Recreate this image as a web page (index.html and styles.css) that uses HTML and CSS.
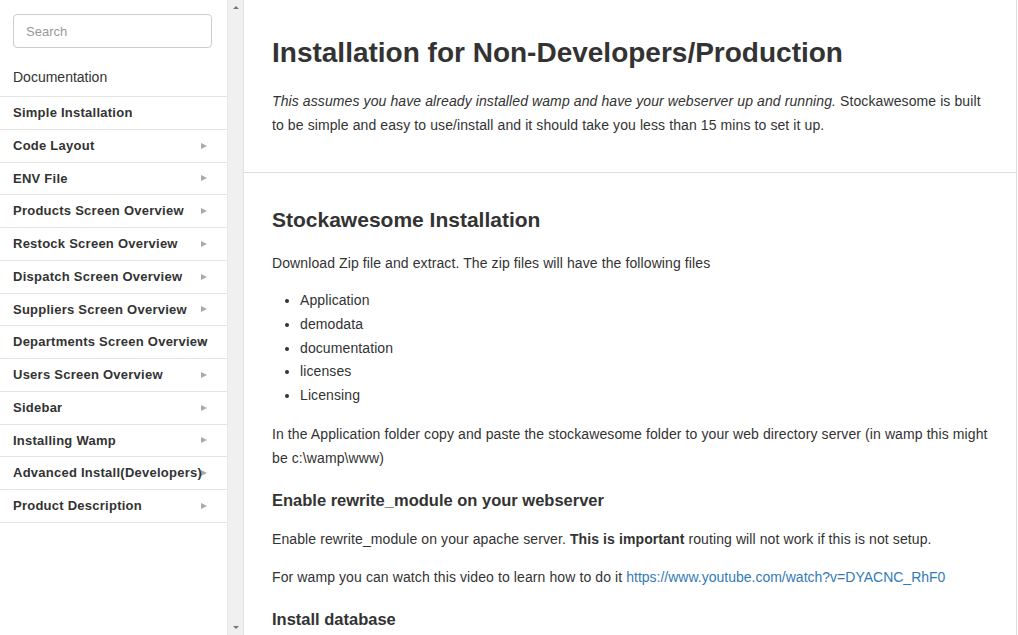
FILE: index.html
```html
<!DOCTYPE html>
<html>
<head>
<meta charset="utf-8">
<link rel="stylesheet" href="styles.css">
</head>
<body>
<div class="layout">
  <nav class="sidebar">
    <div class="search-wrap"><input class="search" type="text" placeholder="Search"></div>
    <div class="doc-title">Documentation</div>
    <ul class="menu">
      <li class="item nochev">Simple Installation</li>
      <li class="item">Code Layout<span class="chev"></span></li>
      <li class="item">ENV File<span class="chev"></span></li>
      <li class="item">Products Screen Overview<span class="chev"></span></li>
      <li class="item">Restock Screen Overview<span class="chev"></span></li>
      <li class="item">Dispatch Screen Overview<span class="chev"></span></li>
      <li class="item">Suppliers Screen Overview<span class="chev"></span></li>
      <li class="item">Departments Screen Overview<span class="chev"></span></li>
      <li class="item">Users Screen Overview<span class="chev"></span></li>
      <li class="item">Sidebar<span class="chev"></span></li>
      <li class="item">Installing Wamp<span class="chev"></span></li>
      <li class="item">Advanced Install(Developers)<span class="chev"></span></li>
      <li class="item">Product Description<span class="chev"></span></li>
    </ul>
  </nav>
  <div class="scrollbar">
    <span class="sb-up"></span>
    <span class="sb-down"></span>
  </div>
  <main class="content">
    <section class="intro">
      <h1>Installation for Non-Developers/Production</h1>
      <p><em>This assumes you have already installed wamp and have your webserver up and running.</em> Stockawesome is built to be simple and easy to use/install and it should take you less than 15 mins to set it up.</p>
    </section>
    <section class="body">
      <h2>Stockawesome Installation</h2>
      <p>Download Zip file and extract. The zip files will have the following files</p>
      <ul class="files">
        <li>Application</li>
        <li>demodata</li>
        <li>documentation</li>
        <li>licenses</li>
        <li>Licensing</li>
      </ul>
      <p>In the Application folder copy and paste the stockawesome folder to your web directory server (in wamp this might be c:\wamp\www)</p>
      <h3>Enable rewrite_module on your webserver</h3>
      <p>Enable rewrite_module on your apache server. <strong>This is important</strong> routing will not work if this is not setup.</p>
      <p>For wamp you can watch this video to learn how to do it <a href="#">https://www.youtube.com/watch?v=DYACNC_RhF0</a></p>
      <h3>Install database</h3>
    </section>
  </main>
</div>
</body>
</html>
```

FILE: styles.css
```css
html, body {
  margin: 0;
  padding: 0;
  height: 100%;
  overflow: hidden;
}
body {
  font-family: "Liberation Sans", Arial, Helvetica, sans-serif;
  font-size: 14px;
  color: #333;
  background: #fff;
}
.layout {
  display: flex;
  height: 635px;
}
.sidebar {
  width: 227px;
  flex: none;
  padding-top: 14px;
  box-sizing: border-box;
}
.search-wrap {
  padding: 0 15px 0 13px;
}
.search {
  display: block;
  width: 199px;
  height: 34px;
  box-sizing: border-box;
  border: 1px solid #ccc;
  border-radius: 4px;
  padding: 0 12px;
  font-family: "Liberation Sans", Arial, sans-serif;
  font-size: 13px;
  color: #555;
  outline: none;
}
.search::placeholder {
  color: #999;
}
.doc-title {
  height: 49px;
  box-sizing: border-box;
  padding: 20px 13px 0;
  font-size: 14px;
  line-height: 18px;
  border-bottom: 1px solid #e5e5e5;
}
.menu {
  list-style: none;
  margin: 0;
  padding: 0;
}
.item {
  position: relative;
  height: 32.75px;
  box-sizing: border-box;
  border-bottom: 1px solid #e5e5e5;
  padding-left: 13px;
  font-size: 13px;
  font-weight: bold;
  letter-spacing: 0.25px;
  line-height: 31.75px;
  color: #333;
  white-space: nowrap;
}
.chev {
  position: absolute;
  right: 20px;
  top: 50%;
  margin-top: -3px;
  width: 0;
  height: 0;
  border-top: 3px solid transparent;
  border-bottom: 3px solid transparent;
  border-left: 6px solid #aaa;
  z-index: -1;
}
.scrollbar {
  position: relative;
  width: 17px;
  flex: none;
  background: #f0f0f0;
  border-left: 1px solid #e8e8e8;
  border-right: 1px solid #e2e2e2;
  box-sizing: border-box;
}
.sb-up, .sb-down {
  position: absolute;
  left: 5px;
  width: 0;
  height: 0;
  border-left: 3px solid transparent;
  border-right: 3px solid transparent;
}
.sb-up {
  top: 6px;
  border-bottom: 3px solid #777;
}
.sb-down {
  bottom: 6px;
  border-top: 3px solid #777;
}
.content {
  flex: 1;
  border-right: 1px solid #ddd;
  margin-right: 1px;
  overflow: hidden;
}
.intro {
  padding: 36px 28px 35px;
  border-bottom: 1px solid #ddd;
}
h1 {
  margin: 0 0 19px;
  font-size: 28px;
  line-height: 34px;
  font-weight: bold;
  color: #333;
}
p {
  margin: 0 0 14px;
  line-height: 24px;
  letter-spacing: 0.1px;
}
.intro p { margin: 0; }
.body {
  padding: 33px 28px 0;
}
h2 {
  margin: 0 0 17px;
  font-size: 21px;
  line-height: 28px;
  font-weight: bold;
}
.files {
  margin: 0 0 14px;
  padding-left: 28px;
}
.files li {
  line-height: 23.75px;
  letter-spacing: 0.1px;
}
h3 {
  margin: 18px 0 15px;
  font-size: 16.5px;
  line-height: 24px;
  font-weight: bold;
}
a {
  color: #337ab7;
  text-decoration: none;
  letter-spacing: 0;
}
```
